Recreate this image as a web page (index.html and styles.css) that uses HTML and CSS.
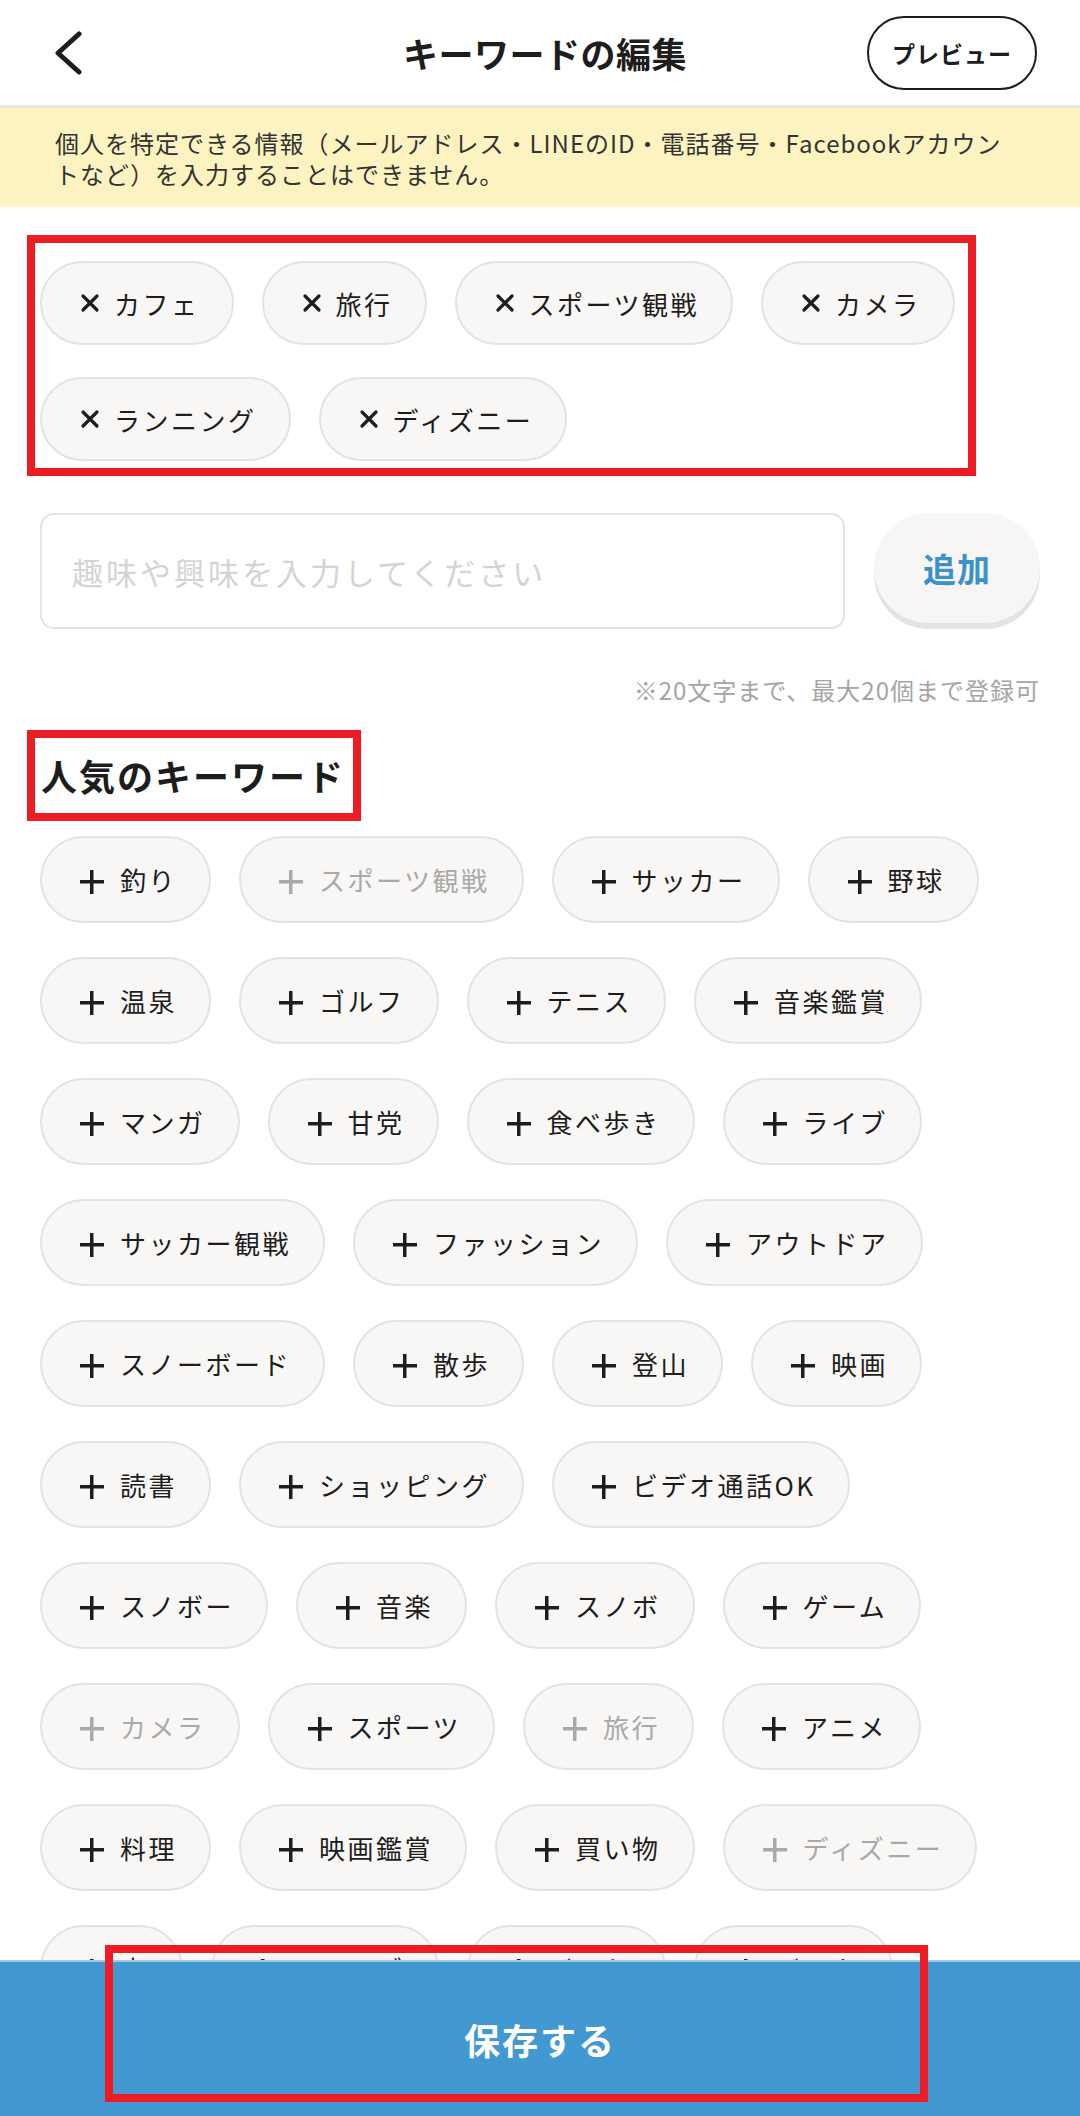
FILE: index.html
```html
<!DOCTYPE html>
<html lang="ja">
<head>
  <meta charset="UTF-8" />
  <meta name="viewport" content="width=device-width, initial-scale=1.0"/>
  <title>キーワードの編集</title>
  <link rel="stylesheet" href="styles.css">
</head>
<body>
  <header class="topbar">
    <a class="back" href="#">
      <svg width="30" height="44" viewBox="0 0 30 44"><polyline points="26,3 5,22 26,41" fill="none" stroke="#1d1d1d" stroke-width="5" stroke-linecap="round" stroke-linejoin="round"/></svg>
    </a>
    <h1 class="title">キーワードの編集</h1>
    <button class="preview">プレビュー</button>
  </header>

  <p class="notice">個人を特定できる情報（メールアドレス・LINEのID・電話番号・Facebookアカウントなど）を入力することはできません。</p>

  <div class="selected">
    <span class="chip chip-del"><svg class="x" viewBox="0 0 20 20"><path d="M3 3L17 17M17 3L3 17" stroke="currentColor" stroke-width="3.2" stroke-linecap="round"/></svg>カフェ</span>
    <span class="chip chip-del"><svg class="x" viewBox="0 0 20 20"><path d="M3 3L17 17M17 3L3 17" stroke="currentColor" stroke-width="3.2" stroke-linecap="round"/></svg>旅行</span>
    <span class="chip chip-del"><svg class="x" viewBox="0 0 20 20"><path d="M3 3L17 17M17 3L3 17" stroke="currentColor" stroke-width="3.2" stroke-linecap="round"/></svg>スポーツ観戦</span>
    <span class="chip chip-del"><svg class="x" viewBox="0 0 20 20"><path d="M3 3L17 17M17 3L3 17" stroke="currentColor" stroke-width="3.2" stroke-linecap="round"/></svg>カメラ</span>
    <span class="chip chip-del"><svg class="x" viewBox="0 0 20 20"><path d="M3 3L17 17M17 3L3 17" stroke="currentColor" stroke-width="3.2" stroke-linecap="round"/></svg>ランニング</span>
    <span class="chip chip-del"><svg class="x" viewBox="0 0 20 20"><path d="M3 3L17 17M17 3L3 17" stroke="currentColor" stroke-width="3.2" stroke-linecap="round"/></svg>ディズニー</span>
  </div>

  <form class="add-row">
    <input type="text" placeholder="趣味や興味を入力してください" />
    <button type="button" class="add-btn">追加</button>
  </form>
  <p class="limit">※20文字まで、最大20個まで登録可</p>

  <h2 class="section-title">人気のキーワード</h2>

  <div class="popular">
    <span class="chip chip-add">釣り</span>
    <span class="chip chip-add is-off">スポーツ観戦</span>
    <span class="chip chip-add">サッカー</span>
    <span class="chip chip-add">野球</span>
    <span class="chip chip-add">温泉</span>
    <span class="chip chip-add">ゴルフ</span>
    <span class="chip chip-add">テニス</span>
    <span class="chip chip-add">音楽鑑賞</span>
    <span class="chip chip-add">マンガ</span>
    <span class="chip chip-add">甘党</span>
    <span class="chip chip-add">食べ歩き</span>
    <span class="chip chip-add">ライブ</span>
    <span class="chip chip-add">サッカー観戦</span>
    <span class="chip chip-add">ファッション</span>
    <span class="chip chip-add">アウトドア</span>
    <span class="chip chip-add">スノーボード</span>
    <span class="chip chip-add">散歩</span>
    <span class="chip chip-add">登山</span>
    <span class="chip chip-add">映画</span>
    <span class="chip chip-add">読書</span>
    <span class="chip chip-add">ショッピング</span>
    <span class="chip chip-add">ビデオ通話OK</span>
    <span class="chip chip-add">スノボー</span>
    <span class="chip chip-add">音楽</span>
    <span class="chip chip-add">スノボ</span>
    <span class="chip chip-add">ゲーム</span>
    <span class="chip chip-add is-off">カメラ</span>
    <span class="chip chip-add">スポーツ</span>
    <span class="chip chip-add is-off">旅行</span>
    <span class="chip chip-add">アニメ</span>
    <span class="chip chip-add">料理</span>
    <span class="chip chip-add">映画鑑賞</span>
    <span class="chip chip-add">買い物</span>
    <span class="chip chip-add is-off">ディズニー</span>
    <span class="chip chip-add">車</span>
    <span class="chip chip-add">ドライブ</span>
    <span class="chip chip-add">バスケ</span>
    <span class="chip chip-add">バイク</span>
  </div>

  <footer class="save-bar">
    <span class="save-mark"></span>
    <button class="save-btn">保存する</button>
  </footer>
</body>
</html>
```

FILE: styles.css
```css
* {
  box-sizing: border-box;
}
body {
  margin: 0;
  background-color: #fff;
  font-family: "Noto Sans CJK JP", "Noto Sans", sans-serif;
  color: #1d1d1d;
}
button,
input {
  font-family: inherit;
}

.topbar {
  height: 108px;
  display: grid;
  grid-template-columns: 1fr auto 1fr;
  align-items: center;
  padding: 0 43px 0 53px;
  border-bottom: 3px solid #e6e6e6;
}
.back {
  display: flex;
  align-items: center;
}
.title {
  margin: 0;
  font-size: 35px;
  font-weight: 700;
  letter-spacing: 0.5px;
}
.preview {
  justify-self: end;
  width: 170px;
  height: 74px;
  border: 2.5px solid #1d1d1d;
  border-radius: 37px;
  background: #fff;
  color: #1d1d1d;
  font-size: 23px;
  font-weight: 700;
  letter-spacing: 1px;
  padding: 0;
}

.notice {
  margin: 0;
  background-color: #fcf3c1;
  padding: 19px 70px 18px 55px;
  font-size: 24px;
  line-height: 31px;
  letter-spacing: 1px;
  color: #333;
}

.selected {
  margin: 28px 104px 0 27px;
  border: 8px solid #ed1c24;
  padding: 18px 5px 7px;
  display: flex;
  flex-wrap: wrap;
  gap: 32px 28px;
}

.chip {
  display: inline-flex;
  align-items: center;
  height: 84px;
  padding: 0 32px 0 38px;
  border: 2px solid #e3e3e3;
  border-radius: 44px;
  background-color: #f8f7f5;
  font-size: 26px;
  letter-spacing: 2.5px;
  white-space: nowrap;
}
.chip-del {
  gap: 14px;
}
.chip-del .x {
  width: 20px;
  height: 20px;
  color: #1d1d1d;
  flex: none;
}
.chip-add {
  height: 87px;
  gap: 16px;
}
.chip-add::before {
  content: "";
  flex: none;
  width: 24px;
  height: 24px;
  margin-top: 4px;
  background:
    linear-gradient(currentColor, currentColor) center / 24px 3.5px no-repeat,
    linear-gradient(currentColor, currentColor) center / 3.5px 24px no-repeat;
}
.chip.is-off {
  color: #a9a9a9;
}

.add-row {
  margin: 37px 40px 0;
  display: flex;
  gap: 29px;
  align-items: flex-start;
}
.add-row input {
  flex: 1;
  height: 116px;
  border: 2px solid #e4e4e4;
  border-radius: 14px;
  padding: 0 30px;
  font-size: 31px;
  letter-spacing: 3px;
  color: #1d1d1d;
  outline: none;
}
.add-row input::placeholder {
  color: #d4d4d4;
}
.add-btn {
  width: 166px;
  height: 110px;
  border: none;
  border-radius: 55px;
  background-color: #f7f6f4;
  box-shadow: 0 6px 0 #e3e3e3;
  color: #3a92cc;
  font-size: 33px;
  font-weight: 700;
  letter-spacing: 1px;
  padding: 0;
}

.limit {
  margin: 46px 40px 0;
  text-align: right;
  font-size: 24px;
  line-height: 30px;
  letter-spacing: 1px;
  color: #a5a5a5;
}

.section-title {
  display: inline-block;
  margin: 25px 0 0 27px;
  height: 91px;
  border: 8px solid #ed1c24;
  padding: 0 8px 0 6px;
  font-size: 36px;
  line-height: 75px;
  font-weight: 700;
  letter-spacing: 2px;
}

.popular {
  margin-top: 15px;
  padding: 0 40px 40px;
  display: flex;
  flex-wrap: wrap;
  gap: 34px 28px;
}

.save-bar {
  position: fixed;
  left: 0;
  right: 0;
  bottom: 0;
  height: 156px;
  background-color: #4299d1;
  border-top: 2px solid #9fcbe8;
  display: flex;
  align-items: center;
  justify-content: center;
}
.save-btn {
  border: none;
  background: none;
  color: #fff;
  font-size: 36px;
  font-weight: 700;
  letter-spacing: 2px;
}
.save-mark {
  position: absolute;
  top: -17px;
  left: 105px;
  width: 823px;
  height: 157px;
  border: 8px solid #ed1c24;
}
```
